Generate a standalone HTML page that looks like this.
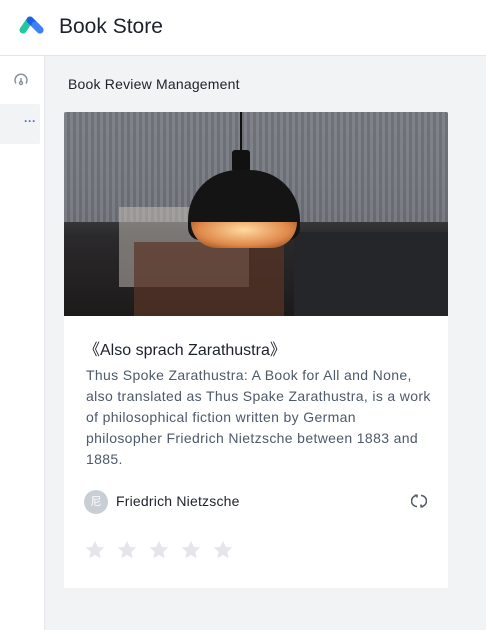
<!DOCTYPE html>
<html><head><style>
*{margin:0;padding:0;box-sizing:border-box}
body{width:486px;height:630px;overflow:hidden;font-family:"Liberation Sans","Noto Sans CJK SC",sans-serif;background:#f2f3f5;position:relative}
.hdr{position:absolute;left:0;top:0;width:486px;height:56px;background:#fff;border-bottom:1px solid #e5e6eb}
.hdr .t{position:absolute;left:59px;top:15px;font-size:21px;color:#1d2129}
.side{position:absolute;left:0;top:56px;width:45px;height:574px;background:#fff;border-right:1px solid #e5e6eb}
.sel{position:absolute;left:0;top:48px;width:40px;height:40px;background:#f2f3f5;border-radius:0 2px 2px 0}
.sel span{position:absolute;left:24px;top:10px;color:#4e6bdf;font-size:12px;font-weight:bold}
.bc{position:absolute;left:68px;top:76px;font-size:14px;color:#1d2129;letter-spacing:.2px}
.card{position:absolute;left:64px;top:112px;width:384px;height:476px;background:#fff;border-radius:2px;overflow:hidden}
.img{position:absolute;left:0;top:0;width:384px;height:204px;background:linear-gradient(180deg,#7c7f86 0%,#5b5e65 35%,#2b2a2c 60%,#1d1a1a 100%);overflow:hidden}
.title{position:absolute;left:20px;top:224px;font-size:16px;color:#1d2129}
.desc{position:absolute;left:22px;top:253px;width:350px;font-size:14px;line-height:21px;color:#4e5969;letter-spacing:.35px}
.av{position:absolute;left:20px;top:378px;width:24px;height:24px;border-radius:50%;background:#c9cdd4;color:#fff;font-size:11px;text-align:center;line-height:24px}
.au{position:absolute;left:52px;top:381px;font-size:14px;color:#1d2129;letter-spacing:.2px}
.stars{position:absolute;left:20px;top:427px;display:flex;gap:10px}
</style></head><body>
<div class="hdr">
<svg style="position:absolute;left:19px;top:15px" width="27" height="20" viewBox="0 0 27 20"><path d="M4 15 L11 5" stroke="#22c7a0" stroke-width="7" stroke-linecap="round"/><path d="M11 5 L21 15" stroke="#1f5fe8" stroke-width="7" stroke-linecap="round"/><path d="M16 10 L21 15" stroke="#3b82f6" stroke-width="7" stroke-linecap="round"/></svg>
<div class="t">Book Store</div></div>
<div class="side">
<svg style="position:absolute;left:13px;top:15px" width="16" height="16" viewBox="0 0 16 16" fill="none" stroke="#86909c" stroke-width="1.4"><path d="M3 12.5A6 6 0 1 1 13 12.5"/><circle cx="8" cy="12" r="1.5"/><path d="M8 10.5V7"/><path d="M4.5 7.5h.1M6 4.5h.1M10 4.5h.1M11.5 7.5h.1"/></svg>
<div class="sel"><span>···</span></div></div>
<div class="bc">Book Review Management</div>
<div class="card">
<div class="img">
<div style="position:absolute;left:0;top:0;width:384px;height:110px;background:repeating-linear-gradient(90deg,#80838a 0 3px,#6d7077 3px 6px);opacity:.9"></div>
<div style="position:absolute;left:55px;top:95px;width:130px;height:80px;background:#c9c2bc;opacity:.5"></div>
<div style="position:absolute;left:70px;top:130px;width:150px;height:74px;background:#5a3426;opacity:.7"></div>
<div style="position:absolute;left:230px;top:120px;width:154px;height:84px;background:#24262a"></div>
<div style="position:absolute;left:176px;top:0;width:2px;height:40px;background:#111"></div>
<div style="position:absolute;left:168px;top:38px;width:18px;height:22px;background:#111;border-radius:3px"></div>
<div style="position:absolute;left:124px;top:58px;width:112px;height:70px;background:#141414;border-radius:50px 50px 12px 12px"></div>
<div style="position:absolute;left:127px;top:110px;width:106px;height:26px;background:radial-gradient(ellipse at 50% 30%,#ffd9a0,#e0894a 60%,#7a3d1c);border-radius:0 0 50px 50px"></div>
</div>
<div class="title">《Also sprach Zarathustra》</div>
<div class="desc">Thus Spoke Zarathustra: A Book for All and None, also translated as Thus Spake Zarathustra, is a work of philosophical fiction written by German philosopher Friedrich Nietzsche between 1883 and 1885.</div>
<div class="av">尼</div>
<div class="au">Friedrich Nietzsche</div>
<svg style="position:absolute;left:347px;top:381px" width="16" height="16" viewBox="0 0 16 16" fill="none" stroke="#4e5969" stroke-width="1.5"><path d="M6 2.5A5.5 5.5 0 0 0 6 13.5"/><path d="M10 2.5A5.5 5.5 0 0 1 10 13.5"/><path d="M10 11.5v2.3h2.3M6 4.5V2.2H3.7"/></svg>
<div class="stars">
<svg width="22" height="22" viewBox="0 0 24 24"><path fill="#e5e6eb" d="M12 2l3 6.5 7 .8-5.2 4.8 1.4 7L12 17.5 5.8 21l1.4-7L2 9.3l7-.8z"/></svg>
<svg width="22" height="22" viewBox="0 0 24 24"><path fill="#e5e6eb" d="M12 2l3 6.5 7 .8-5.2 4.8 1.4 7L12 17.5 5.8 21l1.4-7L2 9.3l7-.8z"/></svg>
<svg width="22" height="22" viewBox="0 0 24 24"><path fill="#e5e6eb" d="M12 2l3 6.5 7 .8-5.2 4.8 1.4 7L12 17.5 5.8 21l1.4-7L2 9.3l7-.8z"/></svg>
<svg width="22" height="22" viewBox="0 0 24 24"><path fill="#e5e6eb" d="M12 2l3 6.5 7 .8-5.2 4.8 1.4 7L12 17.5 5.8 21l1.4-7L2 9.3l7-.8z"/></svg>
<svg width="22" height="22" viewBox="0 0 24 24"><path fill="#e5e6eb" d="M12 2l3 6.5 7 .8-5.2 4.8 1.4 7L12 17.5 5.8 21l1.4-7L2 9.3l7-.8z"/></svg>
</div>
</div>
</body></html>
